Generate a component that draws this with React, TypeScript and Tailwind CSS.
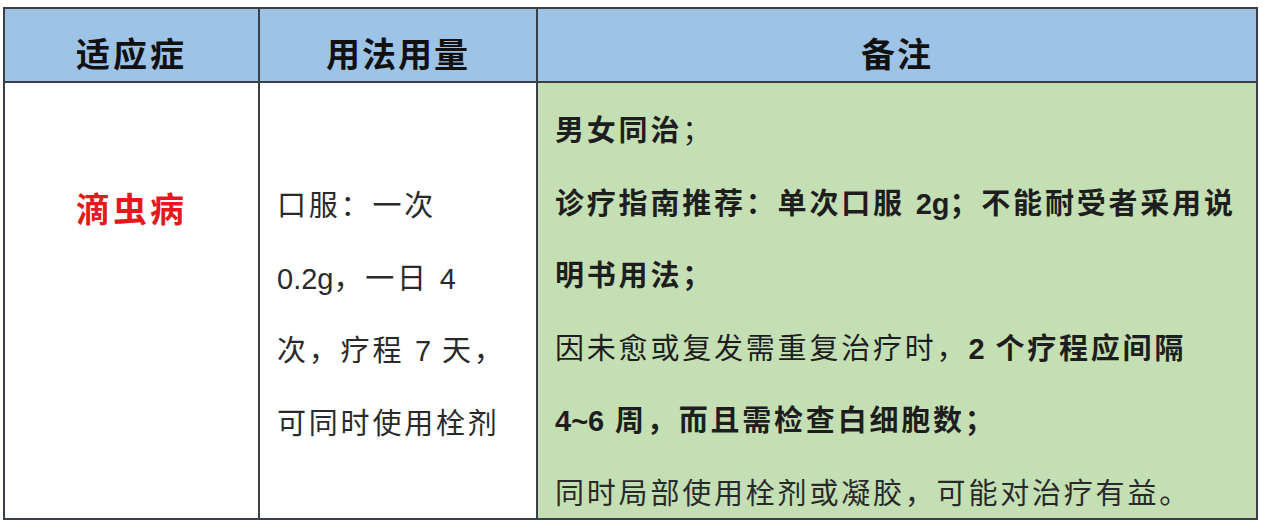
const font = { fontFamily: '"Liberation Sans", "Noto Sans CJK SC", sans-serif' }

const L = ({ children }: { children: string }) => <span className="tracking-normal">{children}</span>

export default function App() {
  return (
    <div className="w-[1280px] h-[530px] bg-white overflow-hidden" style={font}>
      <div className="ml-[3px] mt-[7px] w-[1255px] h-[513px] border-2 border-[#3b3f46] grid grid-cols-[255px_278px_1fr] grid-rows-[74px_1fr]">
        <div className="bg-[#9dc3e6] border-r-2 border-b-2 border-[#3b3f46] flex items-center justify-center pt-[20px] text-[34px] font-bold text-[#111] tracking-[3px]">
          适应症
        </div>
        <div className="bg-[#9dc3e6] border-r-2 border-b-2 border-[#3b3f46] flex items-center justify-center pt-[20px] text-[34px] font-bold text-[#111] tracking-[2px]">
          用法用量
        </div>
        <div className="bg-[#9dc3e6] border-b-2 border-[#3b3f46] flex items-center justify-center pt-[20px] text-[34px] font-bold text-[#111] tracking-[2px]">
          备注
        </div>

        <div className="bg-white border-r-2 border-[#3b3f46] flex justify-center pt-[103px]">
          <span className="text-[34px] font-bold text-[#e3191b] leading-[48px] tracking-[3px]">滴虫病</span>
        </div>
        <div className="bg-white border-r-2 border-[#3b3f46] pl-[17px] pt-[87px] text-[29px] text-[#2a2a2a] leading-[72.5px] tracking-[2.8px]">
          <div className="whitespace-nowrap">口服：一次</div>
          <div className="whitespace-nowrap"><L>0.2g</L>，一日 <L>4</L></div>
          <div className="whitespace-nowrap">次，疗程 <L>7</L> 天，</div>
          <div className="whitespace-nowrap">可同时使用栓剂</div>
        </div>
        <div className="bg-[#c5dfb4] pl-[17px] pt-[12px] text-[29px] text-[#1e1e1e] leading-[72.5px] tracking-[2.8px] overflow-hidden">
          <div className="whitespace-nowrap"><b>男女同治</b>；</div>
          <div className="whitespace-nowrap font-bold">诊疗指南推荐：单次口服 <L>2g</L>；不能耐受者采用说</div>
          <div className="whitespace-nowrap font-bold">明书用法；</div>
          <div className="whitespace-nowrap">因未愈或复发需重复治疗时，<b><L>2</L> 个疗程应间隔</b></div>
          <div className="whitespace-nowrap font-bold"><L>4~6</L> 周，而且需检查白细胞数；</div>
          <div className="whitespace-nowrap text-[#2a2a2a]">同时局部使用栓剂或凝胶，可能对治疗有益。</div>
        </div>
      </div>
    </div>
  )
}
